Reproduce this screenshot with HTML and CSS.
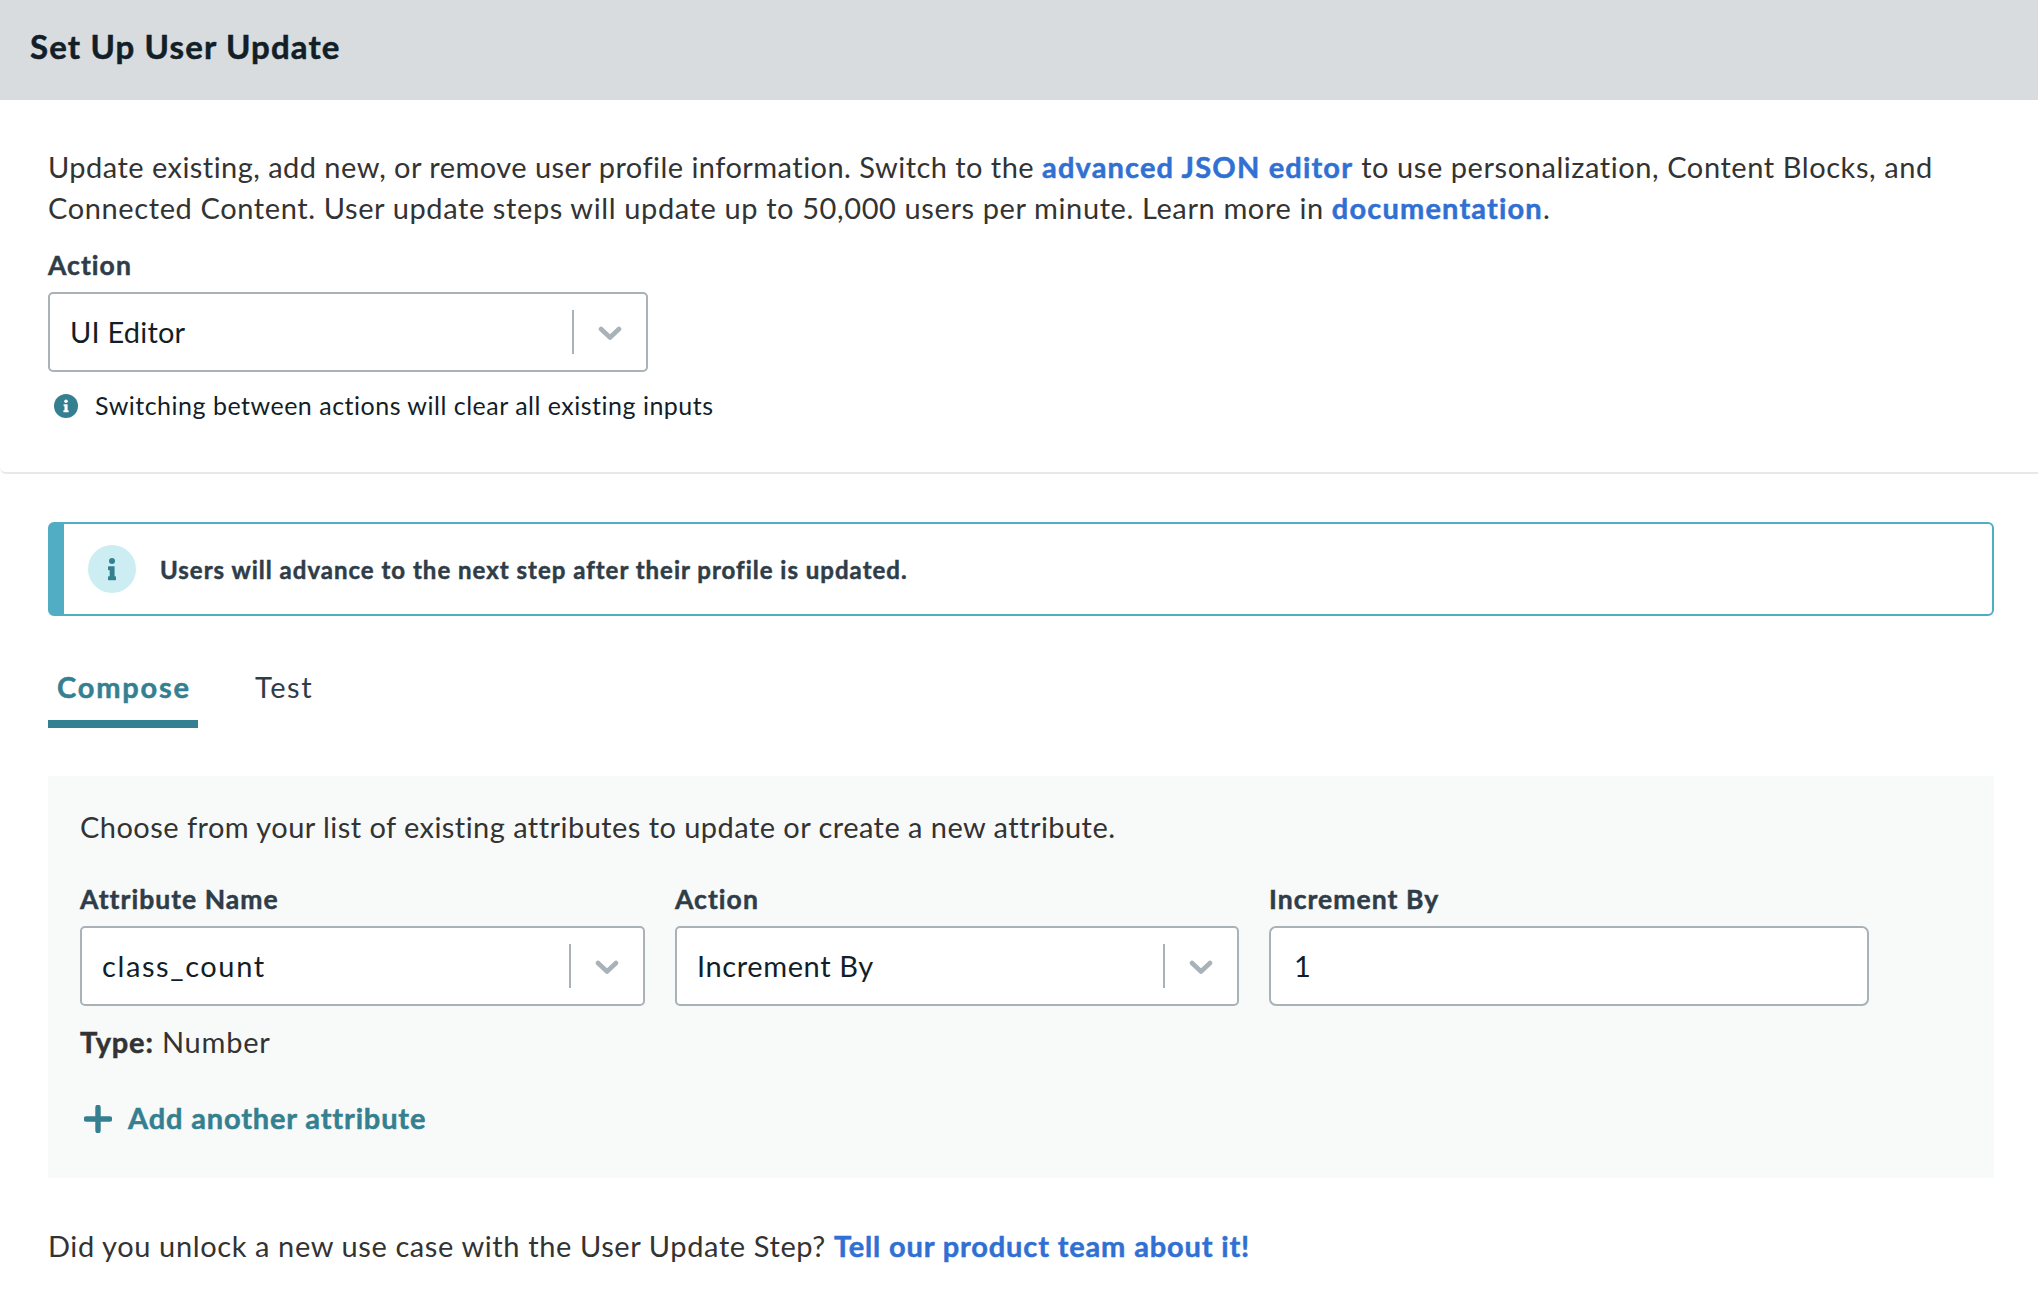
FILE: index.html
```html
<!DOCTYPE html>
<html lang="en">
<head>
<meta charset="utf-8">
<title>Set Up User Update</title>
<link rel="stylesheet" href="styles.css">
</head>
<body>
<header class="page-header"><h1 class="title">Set Up User Update</h1></header>

<section class="intro">
  <p class="lead">
    <span class="line"><span class="lead-start">Update existing, add new, or remove user profile information. Switch to the </span><a class="lead-link">advanced JSON editor</a><span class="lead-end"> to use personalization, Content Blocks, and</span></span>
    <span class="line"><span class="lead-second">Connected Content. User update steps will update up to 50,000 users per minute. Learn more in </span><a class="lead-link">documentation</a><span>.</span></span>
  </p>
  <div class="field field-action">
    <label class="label">Action</label>
    <div class="select">
      <span class="value v-editor">UI Editor</span>
      <span class="separator"></span>
      <svg class="chevron" viewBox="0 0 24 16"><path d="M3 4l9 8.5L21 4"/></svg>
    </div>
  </div>
  <div class="hint">
    <svg class="hint-icon" viewBox="0 0 24 24"><circle cx="12" cy="12" r="12"/><circle class="glyph" cx="12" cy="7.2" r="1.8"/><path class="glyph" d="M9.6 10.2h4v6h1v2.1H9.4v-2.1h1.1V12.2h-.9z"/></svg>
    <span>Switching between actions will clear all existing inputs</span>
  </div>
</section>

<main class="content">
  <div class="alert">
    <svg class="alert-icon" viewBox="0 0 48 48"><circle class="disc" cx="24" cy="24" r="24"/><circle cx="24" cy="16" r="3"/><path d="M20.7 21.3h5.9v10h.7a.7.7 0 0 1 .7.7v2.5a.7.7 0 0 1-.7.7h-6.6a.7.7 0 0 1-.7-.7V32a.7.7 0 0 1 .7-.7h1v-6h-1a.7.7 0 0 1-.7-.7V22a.7.7 0 0 1 .7-.7z"/></svg>
    <span>Users will advance to the next step after their profile is updated.</span>
  </div>

  <nav class="tabs">
    <a class="tab active">Compose</a>
    <a class="tab">Test</a>
  </nav>

  <section class="panel">
    <p class="panel-text">Choose from your list of existing attributes to update or create a new attribute.</p>
    <div class="fields">
      <div class="field">
        <label class="label">Attribute Name</label>
        <div class="select">
          <span class="value v-class">class_count</span>
          <span class="separator"></span>
          <svg class="chevron" viewBox="0 0 24 16"><path d="M3 4l9 8.5L21 4"/></svg>
        </div>
      </div>
      <div class="field">
        <label class="label">Action</label>
        <div class="select">
          <span class="value">Increment By</span>
          <span class="separator"></span>
          <svg class="chevron" viewBox="0 0 24 16"><path d="M3 4l9 8.5L21 4"/></svg>
        </div>
      </div>
      <div class="field">
        <label class="label">Increment By</label>
        <div class="select input"><span class="value">1</span></div>
      </div>
    </div>
    <p class="type"><b>Type:</b> <span>Number</span></p>
    <a class="add">
      <svg class="plus" viewBox="0 0 28 28"><path d="M14 2.4v23.2M2.4 14h23.2"/></svg>
      <span>Add another attribute</span>
    </a>
  </section>

  <p class="feedback"><span>Did you unlock a new use case with the User Update Step? </span><a>Tell our product team about it!</a></p>
</main>
</body>
</html>
```

FILE: styles.css
```css
* { box-sizing: border-box; }
body {
  margin: 0;
  background: #fff;
  color: #333;
  font: 29px/41px Lato, "Liberation Sans", sans-serif;
  font-variant-ligatures: none;
  white-space: nowrap;
}
p, h1 { margin: 0; }
a, b, .title, .label, .alert { -webkit-text-stroke: 0.5px currentColor; }
a { color: #3170d3; font-weight: 700; }
.page-header { height: 100px; padding: 24px 30px; background: #d8dcdf; }
.title { font-size: 33px; line-height: 44px; font-weight: 700; letter-spacing: 1.15px; color: #121e28; }

.intro {
  height: 374px;
  padding: 46px 44px 0 48px;
  border-bottom: 2px solid #e8e8e8;
  border-bottom-left-radius: 6px;
}
.line { display: block; white-space: pre; }
.lead-start { letter-spacing: 0.46px; }
.lead-link { letter-spacing: 1.17px; }
.lead-end { letter-spacing: 0.57px; }
.lead-second { letter-spacing: 0.61px; }
.label { display: block; height: 47px; font-size: 26.5px; font-weight: 700; letter-spacing: 1.05px; color: #2f3d49; }
.field-action { width: 600px; margin-top: 17px; }
.select {
  display: flex;
  align-items: center;
  height: 80px;
  padding: 0 24px 0 20px;
  border: 2px solid #a9b2b7;
  border-radius: 5px;
  background: #fff;
  color: #121e28;
}
.input { padding-left: 23px; border-radius: 7px; }
.value { flex: 1; padding-bottom: 2px; letter-spacing: 0.6px; }
.v-editor { letter-spacing: 0.2px; }
.v-class { letter-spacing: 1.6px; }
.separator { width: 2px; height: 44px; margin-right: 24px; background: #a9b2b7; }
.chevron { width: 24px; height: 16px; margin-top: 2px; }
.chevron path { fill: none; stroke: #a9b2b7; stroke-width: 4.6; stroke-linecap: round; stroke-linejoin: round; }
.hint { display: flex; align-items: center; gap: 17px; margin: 13px 0 0 6px; font-size: 25px; letter-spacing: 0.5px; color: #121e28; }
.hint-icon { width: 24px; height: 24px; fill: #348091; }
.glyph { fill: #fff; }

.content { padding: 48px 44px 0 48px; }
.alert {
  display: flex;
  align-items: center;
  gap: 24px;
  height: 94px;
  padding-left: 24px;
  border: 2px solid #51adc4;
  border-left-width: 16px;
  border-radius: 6px;
  font-size: 24px;
  font-weight: 700;
  letter-spacing: 1px;
  color: #2f3d49;
}
.alert-icon { width: 48px; height: 48px; fill: #348091; -webkit-text-stroke: 0; }
.disc { fill: #cceef2; }

.tabs { display: flex; gap: 48px; height: 112px; padding-top: 50px; }
.tab { height: 62px; padding: 0 9px; font-weight: 400; letter-spacing: 1.6px; color: #2f3d49; -webkit-text-stroke: 0; }
.tab.active { width: 150px; font-weight: 700; letter-spacing: 1.8px; color: #348091; border-bottom: 8px solid #348091; -webkit-text-stroke: 0.5px; }

.panel { height: 402px; margin-top: 48px; padding: 30px 32px 0; background: #f8faf9; }
.panel-text { letter-spacing: 0.45px; }
.fields { display: grid; grid-template-columns: 565px 564px 600px; gap: 30px; margin-top: 32px; }
.type { margin-top: 15px; letter-spacing: 0.8px; }
.add { display: flex; align-items: center; gap: 16px; margin: 35px 0 0 4px; letter-spacing: 0.85px; color: #348091; }
.plus { width: 28px; height: 28px; margin-top: 3px; }
.plus path { fill: none; stroke: #348091; stroke-width: 5.4; stroke-linecap: round; }
.feedback { margin-top: 47px; white-space: pre; letter-spacing: 0.61px; }
.feedback a { letter-spacing: 0.85px; }
```
